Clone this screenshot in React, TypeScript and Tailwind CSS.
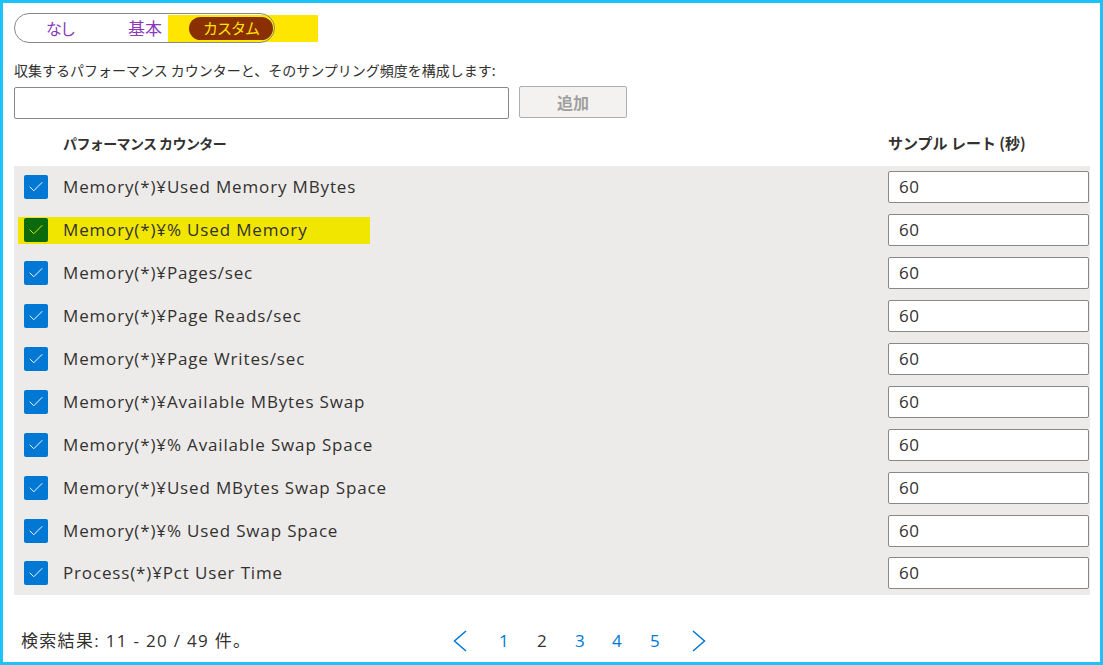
import { Check } from 'lucide-react';

const counters = [
  'Memory(*)¥Used Memory MBytes',
  'Memory(*)¥% Used Memory',
  'Memory(*)¥Pages/sec',
  'Memory(*)¥Page Reads/sec',
  'Memory(*)¥Page Writes/sec',
  'Memory(*)¥Available MBytes Swap',
  'Memory(*)¥% Available Swap Space',
  'Memory(*)¥Used MBytes Swap Space',
  'Memory(*)¥% Used Swap Space',
  'Process(*)¥Pct User Time',
];

function CounterRow({ name, marked }: { name: string; marked?: boolean }) {
  return (
    <div className="flex h-[42.9px] items-center">
      <div className={`flex h-[27px] w-[352px] items-center gap-[15px] pl-[6px] ${marked ? 'bg-[#f0e600]' : ''}`}>
        <span className={`flex h-6 w-6 shrink-0 items-center justify-center rounded-[2px] ${marked ? 'bg-[#0b6a0b]' : 'bg-[#0078d4]'}`}>
          <Check size={18} strokeWidth={1.3} className={marked ? 'text-[#f0e600]' : 'text-white'} />
        </span>
        <span className="whitespace-nowrap text-[17px] leading-[24px] tracking-[0.85px] text-[#323130]">{name}</span>
      </div>
      <div className="ml-auto flex h-[32px] w-[201px] items-center rounded-[2px] border border-[#8a8886] bg-white px-[10px] text-[17px] leading-[24px] tracking-[0.5px] text-[#323130]">
        60
      </div>
    </div>
  );
}

export default function App() {
  return (
    <div className="h-[665px] w-[1103px] border-[3px] border-[#1cc3fb] bg-white pl-[11px] pr-[10px] pt-[10px] font-['Open_Sans','Noto_Sans_CJK_JP',sans-serif] text-[#323130]">
      <div className="relative flex h-[30px] w-[261px] items-center rounded-full font-['Noto_Sans_CJK_JP',sans-serif] leading-[22px]">
        <span className="ml-[32px] shrink-0 whitespace-nowrap text-[16px] tracking-[-2px] text-[#8a3ab9]">なし</span>
        <span className="ml-[54px] shrink-0 whitespace-nowrap text-[17px] text-[#8a3ab9]">基本</span>
        <div className="ml-[6px] flex h-[27px] w-[150px] shrink-0 items-center bg-[#ffe600] pl-[21px]">
          <span className="flex h-[23px] w-[84px] items-center justify-center whitespace-nowrap rounded-full bg-[#8a2f00] text-[15px] tracking-[-1px] text-[#ffe600]">
            カスタム
          </span>
        </div>
        <div className="pointer-events-none absolute inset-0 rounded-full border border-[#8a8886]" />
      </div>
      <p className="mt-[17px] font-['Noto_Sans_CJK_JP',sans-serif] text-[14px] leading-[20px]">
        収集するパフォーマンス カウンターと、そのサンプリング頻度を構成します:
      </p>
      <div className="mt-[7px] flex gap-[10px]">
        <div className="h-[32px] w-[495px] rounded-[2px] border border-[#8a8886] bg-white" />
        <button className="-mt-[1px] h-[32px] w-[108px] rounded-[2px] border border-[#b0aeac] bg-[#f3f2f1] font-['Noto_Sans_CJK_JP',sans-serif] text-[16px] font-bold leading-[20px] text-[#a19f9d]">
          追加
        </button>
      </div>
      <div className="mt-[12px] flex h-[24px] items-center font-['Noto_Sans_CJK_JP',sans-serif] font-bold leading-[24px]">
        <span className="ml-[49px] text-[14px] tracking-[-0.6px]">パフォーマンス カウンター</span>
        <span className="ml-auto w-[202px] text-[15px]">サンプル レート (秒)</span>
      </div>
      <div className="mt-[11px] bg-[#edebe9] pl-[4px] pr-[1px]">
        {counters.map((c, i) => (
          <CounterRow key={c} name={c} marked={i === 1} />
        ))}
      </div>
      <div className="mt-[34px] flex h-[24px] items-center">
        <span className="w-[439px] whitespace-nowrap pl-[7px] text-[17px] leading-[24px] tracking-[1.3px]">
          検索結果: 11 - 20 / 49 件。
        </span>
        <svg width="14" height="22" viewBox="0 0 14 22" fill="none" stroke="#0078d4" strokeWidth="1.5">
          <path d="M13 1 L1.5 11 L13 21" />
        </svg>
        <div className="ml-[32px] flex items-center text-[17px] leading-[24px] text-[#0078d4]">
          <span className="w-[38px]">1</span>
          <span className="w-[38px] text-[#323130]">2</span>
          <span className="w-[37px]">3</span>
          <span className="w-[38px]">4</span>
          <span className="w-[42px]">5</span>
        </div>
        <svg width="14" height="22" viewBox="0 0 14 22" fill="none" stroke="#0078d4" strokeWidth="1.5">
          <path d="M1 1 L12.5 11 L1 21" />
        </svg>
      </div>
    </div>
  );
}
